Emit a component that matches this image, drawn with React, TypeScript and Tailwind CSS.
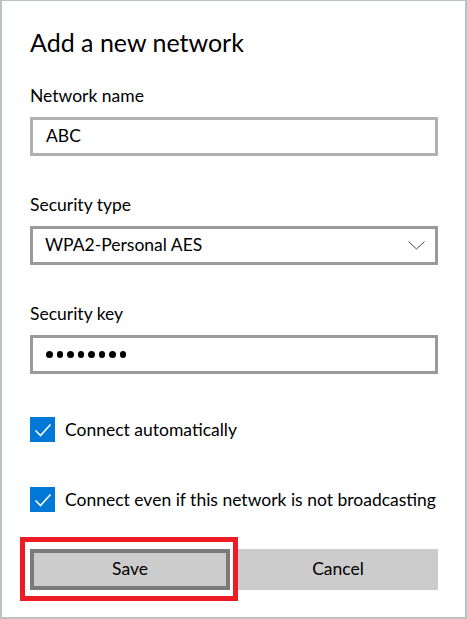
import { useState } from "react";

const font = { fontFamily: 'Lato, "Noto Sans", sans-serif' };

function Checkbox({ checked, label, onToggle }: { checked: boolean; label: string; onToggle: () => void }) {
  return (
    <div className="flex items-center h-[25px] cursor-pointer" onClick={onToggle}>
      <div
        className={
          checked
            ? "w-[25px] h-[25px] bg-[#0078d7] flex items-center justify-center shrink-0"
            : "w-[25px] h-[25px] border-2 border-[#333] shrink-0"
        }
      >
        {checked && (
          <svg width="25" height="25" viewBox="0 0 25 25">
            <path d="M5.5 13.5 L10.5 18.5 L20.5 7.5" fill="none" stroke="#fff" strokeWidth="1.6" />
          </svg>
        )}
      </div>
      <span className="ml-[10px] text-[17.5px] leading-[22px] text-black whitespace-nowrap">{label}</span>
    </div>
  );
}

export default function App() {
  const [auto, setAuto] = useState(true);
  const [hidden, setHidden] = useState(true);

  return (
    <div
      className="relative w-[467px] h-[619px] bg-white border-x-2 border-b-2 border-t border-[#bac2c2] pl-[28px] pt-[25px]"
      style={font}
    >
      <h1 className="text-[25px] leading-[32px] text-black">Add a new network</h1>

      <div className="mt-[27px] text-[17.5px] leading-[22px] text-black">Network name</div>
      <div className="mt-[10px] w-[408px] h-[39px] border-[3px] border-[#b0b0b0] flex items-center pl-[13px] text-[17.5px] text-black">
        ABC
      </div>

      <div className="mt-[38px] text-[17.5px] leading-[22px] text-black">Security type</div>
      <div className="mt-[10px] w-[408px] h-[39px] border-[3px] border-[#9a9a9a] flex items-center justify-between pl-[12px] pr-[10px] text-[17.5px] text-black">
        <span>WPA2-Personal AES</span>
        <svg width="17" height="9" viewBox="0 0 17 9">
          <path d="M0.5 0.5 L8.5 8 L16.5 0.5" fill="none" stroke="#444" strokeWidth="1" />
        </svg>
      </div>

      <div className="mt-[38px] text-[17.5px] leading-[22px] text-black">Security key</div>
      <div className="mt-[10px] w-[408px] h-[39px] border-[3px] border-[#9a9a9a] flex items-center pl-[13px] gap-[4px]">
        {Array.from({ length: 8 }).map((_, i) => (
          <span key={i} className="w-[6.5px] h-[6.5px] rounded-full bg-black" />
        ))}
      </div>

      <div className="mt-[43px]">
        <Checkbox checked={auto} label="Connect automatically" onToggle={() => setAuto(!auto)} />
      </div>
      <div className="mt-[45px]">
        <Checkbox
          checked={hidden}
          label="Connect even if this network is not broadcasting"
          onToggle={() => setHidden(!hidden)}
        />
      </div>

      <div className="mt-[37px] flex gap-[8px] w-[408px]">
        <button className="w-[200px] h-[41px] bg-[#cccccc] border-[4px] border-[#7a7a7a] text-[17.5px] text-black">
          Save
        </button>
        <button className="w-[200px] h-[41px] bg-[#cccccc] text-[17.5px] text-black">Cancel</button>
      </div>

      {/* red highlight around Save */}
      <div className="absolute left-[18px] top-[536px] w-[218px] h-[64px] border-[5px] border-[#ed1c24] pointer-events-none" />
    </div>
  );
}
